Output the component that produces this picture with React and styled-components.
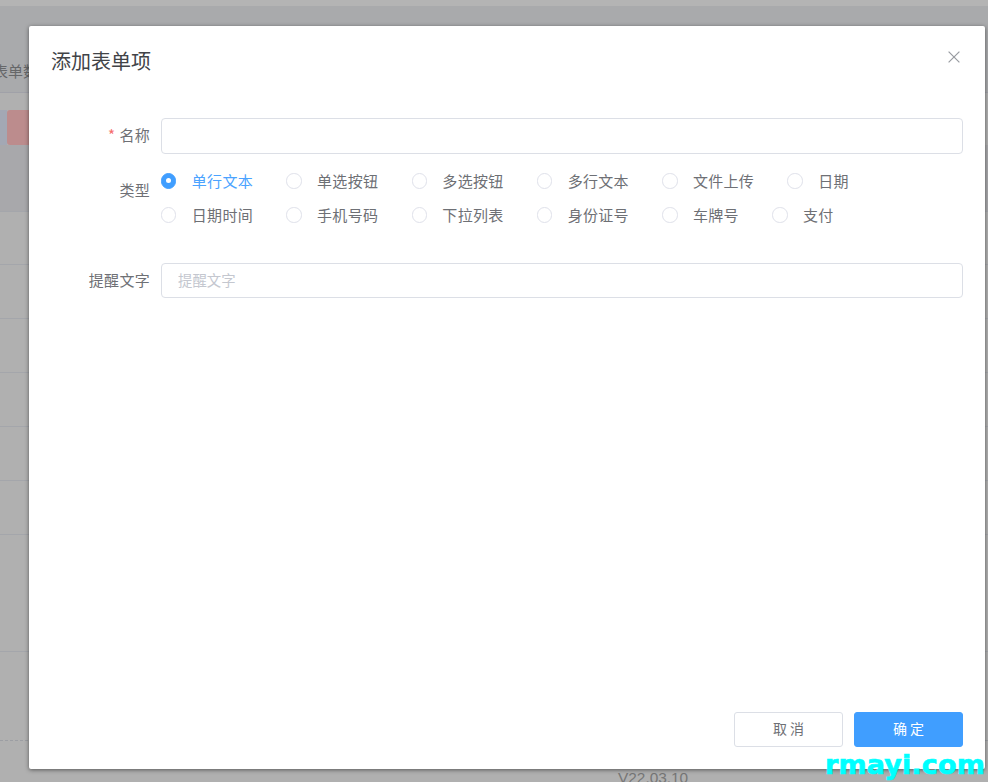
import React from 'react';
import styled, { createGlobalStyle } from 'styled-components';

const FONT = '"Noto Sans CJK SC", "Liberation Sans", sans-serif';

const TYPES = [
  '单行文本',
  '单选按钮',
  '多选按钮',
  '多行文本',
  '文件上传',
  '日期',
  '日期时间',
  '手机号码',
  '下拉列表',
  '身份证号',
  '车牌号',
  '支付',
];

const ROW_HEIGHTS = [53, 54, 54, 54, 54, 54, 117];

const App = () => (
  <Page>
    <GlobalStyle />
    <TopBar />
    <TabBar>
      <TabText>表单数据</TabText>
    </TabBar>
    <Toolbar>
      <GhostButton />
      <DangerButton />
    </Toolbar>
    <TableHead />
    {ROW_HEIGHTS.map((height, i) => (
      <TableRow key={i} $height={height} />
    ))}
    <DashedLine />
    <VersionText>V22.03.10</VersionText>

    <Mask>
      <Dialog>
        <Header>
          <Title>添加表单项</Title>
          <CloseButton aria-label="close">
            <svg width="12" height="12" viewBox="0 0 12 12">
              <path d="M0.6 0.6 L11.4 11.4 M11.4 0.6 L0.6 11.4" stroke="#989ba1" strokeWidth="1.2" fill="none" />
            </svg>
          </CloseButton>
        </Header>
        <Body>
          <FormRow $gap={10}>
            <Label>
              <Star>*</Star>名称
            </Label>
            <Input />
          </FormRow>
          <FormRow $gap={31}>
            <Label $top={9}>类型</Label>
            <RadioGroup>
              {TYPES.map((name, i) => (
                <RadioItem key={name}>
                  <RadioDot $checked={i === 0} />
                  <RadioText $checked={i === 0}>{name}</RadioText>
                </RadioItem>
              ))}
            </RadioGroup>
          </FormRow>
          <FormRow>
            <Label>提醒文字</Label>
            <Input placeholder="提醒文字" $height={35} />
          </FormRow>
        </Body>
        <Footer>
          <Button>取 消</Button>
          <Button $primary>确 定</Button>
        </Footer>
      </Dialog>
    </Mask>
    <Watermark>rmayi.com</Watermark>
  </Page>
);

export default App;

const GlobalStyle = createGlobalStyle`
  html, body {
    margin: 0;
    padding: 0;
    background: #fff;
  }
  * {
    box-sizing: border-box;
  }
`;

const Page = styled.div`
  position: relative;
  width: 988px;
  height: 782px;
  overflow: hidden;
  background: #dcdcdc;
  font-family: ${FONT};
`;

const TopBar = styled.div`
  height: 6px;
  background: #e1e1e1;
`;

const TabBar = styled.div`
  height: 87px;
  display: flex;
  align-items: flex-end;
  padding-bottom: 10px;
  background: #d4d5d8;
  border-bottom: 1px solid #c8cad2;
`;

const TabText = styled.span`
  margin-left: -7px;
  font-size: 15px;
  line-height: 22px;
  color: #808184;
`;

const Toolbar = styled.div`
  height: 52px;
  display: flex;
  padding-top: 17px;
`;

const GhostButton = styled.div`
  width: 7px;
  height: 35px;
  background: #ccd3e2;
`;

const DangerButton = styled.div`
  width: 40px;
  height: 35px;
  border-radius: 3px;
  background: #ecb0b1;
`;

const TableHead = styled.div`
  height: 67px;
  background: #d3d3d6;
  border-bottom: 1px solid #cdd0d6;
`;

const TableRow = styled.div`
  height: ${(p) => p.$height}px;
  border-bottom: 1px solid #cdd0d6;
`;

const DashedLine = styled.div`
  margin-top: 88px;
  border-top: 1px dashed #c4c6cc;
`;

const VersionText = styled.div`
  margin: 29px 0 0 618px;
  font-family: "Liberation Sans", sans-serif;
  font-size: 15.4px;
  line-height: 16px;
  color: #959595;
`;

const Mask = styled.div`
  position: absolute;
  inset: 0;
  padding: 26px 3px 13px 29px;
  background: rgba(0, 0, 0, 0.2);
`;

const Dialog = styled.div`
  height: 100%;
  display: flex;
  flex-direction: column;
  background: #fff;
  border-radius: 2px;
  box-shadow: 0 1px 4px rgba(0, 0, 0, 0.5);
`;

const Header = styled.div`
  position: relative;
  padding: 20px 22px 0;
`;

const Title = styled.div`
  font-size: 20px;
  line-height: 30px;
  color: #414347;
`;

const CloseButton = styled.button`
  position: absolute;
  top: 25px;
  right: 25px;
  width: 12px;
  height: 12px;
  padding: 0;
  display: block;
  line-height: 0;
  border: 0;
  background: none;
`;

const Body = styled.div`
  flex: 1;
  padding: 42px 22px 0 0;
`;

const FormRow = styled.div`
  display: flex;
  margin-bottom: ${(p) => p.$gap || 0}px;
`;

const Label = styled.label`
  flex: none;
  width: 132px;
  height: 35px;
  margin-top: ${(p) => p.$top || 0}px;
  padding-right: 11px;
  text-align: right;
  font-size: 15px;
  line-height: 33px;
  letter-spacing: 0.3px;
  color: #6e7075;
`;

const Star = styled.span`
  margin-right: 4px;
  color: #f56c6c;
`;

const Input = styled.input`
  flex: 1;
  min-width: 0;
  height: ${(p) => p.$height || 36}px;
  padding: 0 16px 2px;
  border: 1px solid #dcdfe6;
  border-radius: 4px;
  outline: none;
  font-family: ${FONT};
  font-size: 14.4px;
  color: #606266;
  background: #fff;

  &::placeholder {
    color: #c4c7cf;
  }
`;

const RadioGroup = styled.div`
  flex: 1;
  display: flex;
  flex-wrap: wrap;
`;

const RadioItem = styled.div`
  display: flex;
  align-items: center;
  height: 34px;
  margin-right: 33.3px;
`;

const RadioDot = styled.span`
  width: 15.4px;
  height: 15.4px;
  margin-right: 15.4px;
  border-radius: 50%;
  border: 1px solid ${(p) => (p.$checked ? '#409eff' : '#dfe1ea')};
  background: ${(p) => (p.$checked ? '#409eff' : '#fff')};
  display: flex;
  align-items: center;
  justify-content: center;

  &::after {
    content: '';
    width: 5px;
    height: 5px;
    border-radius: 50%;
    background: ${(p) => (p.$checked ? '#fff' : 'transparent')};
  }
`;

const RadioText = styled.span`
  font-size: 15px;
  line-height: 20px;
  letter-spacing: 0.3px;
  color: ${(p) => (p.$checked ? '#4ba3ff' : '#6e7075')};
`;

const Footer = styled.div`
  display: flex;
  justify-content: flex-end;
  gap: 11px;
  padding: 0 22px 22px;
`;

const Button = styled.button`
  width: 109px;
  height: 35px;
  padding: 0 0 3px;
  border: 1px solid ${(p) => (p.$primary ? '#409eff' : '#dcdfe6')};
  border-radius: 3px;
  font-family: ${FONT};
  font-size: 14px;
  color: ${(p) => (p.$primary ? '#fff' : '#6e7075')};
  background: ${(p) => (p.$primary ? '#409eff' : '#fff')};
`;

const Watermark = styled.div`
  position: absolute;
  right: 3px;
  bottom: 1px;
  font-family: "DejaVu Sans", sans-serif;
  font-weight: 700;
  font-size: 27px;
  line-height: 32px;
  letter-spacing: 0.15px;
  color: #00ffff;
  -webkit-text-stroke: 0.7px #00ffff;
`;
